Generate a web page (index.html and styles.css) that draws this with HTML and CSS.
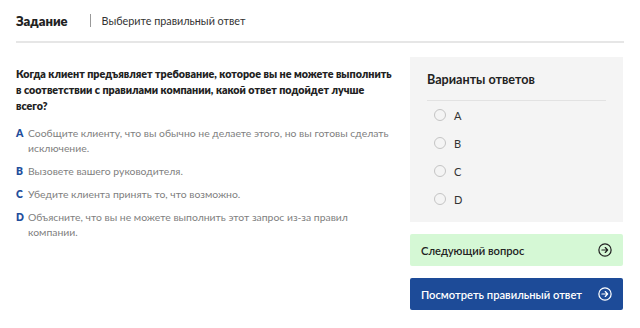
FILE: index.html
```html
<!DOCTYPE html>
<html lang="ru">
<head>
  <meta charset="UTF-8">
  <title>Задание</title>
  <link rel="stylesheet" href="styles.css">
</head>
<body>
  <header class="task-header">
    <span class="task-title">Задание</span>
    <span class="task-sep"></span>
    <span class="task-hint">Выберите правильный ответ</span>
  </header>

  <main class="task-body">
    <section class="question">
      <p class="question-text">Когда клиент предъявляет требование, которое вы не можете выполнить в соответствии с правилами компании, какой ответ подойдет лучше всего?</p>
      <ul class="options">
        <li><b>A</b><span>Сообщите клиенту, что вы обычно не делаете этого, но вы готовы сделать исключение.</span></li>
        <li><b>B</b><span>Вызовете вашего руководителя.</span></li>
        <li><b>C</b><span>Убедите клиента принять то, что возможно.</span></li>
        <li><b>D</b><span>Объясните, что вы не можете выполнить этот запрос из-за правил компании.</span></li>
      </ul>
    </section>

    <aside class="side">
      <div class="answers">
        <h2>Варианты ответов</h2>
        <label class="radio"><input type="radio" name="ans"><span>A</span></label>
        <label class="radio"><input type="radio" name="ans"><span>B</span></label>
        <label class="radio"><input type="radio" name="ans"><span>C</span></label>
        <label class="radio"><input type="radio" name="ans"><span>D</span></label>
      </div>

      <button class="btn btn-next">
        <span>Следующий вопрос</span>
        <svg viewBox="0 0 16 16" width="14" height="14"><circle cx="8" cy="8" r="7" fill="none" stroke="currentColor" stroke-width="1.4"/><path d="M4.5 8h6.5M8.3 5.2L11 8l-2.7 2.8" fill="none" stroke="currentColor" stroke-width="1.4" stroke-linecap="round" stroke-linejoin="round"/></svg>
      </button>
      <button class="btn btn-show">
        <span>Посмотреть правильный ответ</span>
        <svg viewBox="0 0 16 16" width="14" height="14"><circle cx="8" cy="8" r="7" fill="none" stroke="currentColor" stroke-width="1.4"/><path d="M4.5 8h6.5M8.3 5.2L11 8l-2.7 2.8" fill="none" stroke="currentColor" stroke-width="1.4" stroke-linecap="round" stroke-linejoin="round"/></svg>
      </button>
    </aside>
  </main>
</body>
</html>
```

FILE: styles.css
```css
body {
  margin: 0;
  padding: 0 16px;
  font-family: Lato, "Open Sans", sans-serif;
  color: #222;
  background: #fff;
}

/* Header */
.task-header {
  display: flex;
  align-items: center;
  height: 43px;
  border-bottom: 2px solid #e6e6e6;
  box-sizing: border-box;
}
.task-title {
  font-weight: 800;
  font-size: 13px;
}
.task-sep {
  width: 1px;
  height: 13px;
  background: #999;
  margin: 0 11px 0 22px;
}
.task-hint {
  font-size: 10.8px;
  color: #333;
}

/* Body */
.task-body {
  display: flex;
  justify-content: space-between;
  padding-top: 14px;
}
.question {
  width: 380px;
}
.question-text {
  margin: 9px 0 12px;
  font-size: 10.7px;
  font-weight: 800;
  line-height: 16px;
}
.options {
  list-style: none;
  margin: 0;
  padding: 0;
}
.options li {
  display: flex;
  font-size: 10.4px;
  line-height: 15px;
  color: #808080;
  margin-bottom: 8px;
}
.options b {
  color: #1f4e9c;
  font-weight: 800;
  width: 12px;
  flex-shrink: 0;
}

/* Side panel */
.side {
  width: 213px;
  margin-right: 1px;
}
.answers {
  background: #f4f4f4;
  padding: 15px 17px 10px;
  height: 165px;
  box-sizing: border-box;
}
.answers h2 {
  margin: 0;
  font-size: 12.6px;
  font-weight: 700;
  padding-bottom: 13px;
  border-bottom: 1px solid #e2e2e2;
}
.radio {
  display: flex;
  align-items: center;
  height: 28px;
  padding-left: 7px;
  font-size: 11px;
  color: #333;
}
.radio input {
  appearance: none;
  width: 12px;
  height: 12px;
  margin: 0 8px 0 0;
  border: 1px solid #c4c4c4;
  border-radius: 50%;
  background: #f4f4f4;
}

.btn {
  display: flex;
  align-items: center;
  justify-content: space-between;
  width: 100%;
  height: 32px;
  border: none;
  border-radius: 2px;
  padding: 0 11px;
  font-family: inherit;
  font-size: 11.2px;
  font-weight: 600;
}
.btn-next {
  margin-top: 12px;
  background: #d5f8d5;
  color: #222;
}
.btn-show {
  margin-top: 12px;
  background: #1d4b98;
  color: #fff;
}
```
